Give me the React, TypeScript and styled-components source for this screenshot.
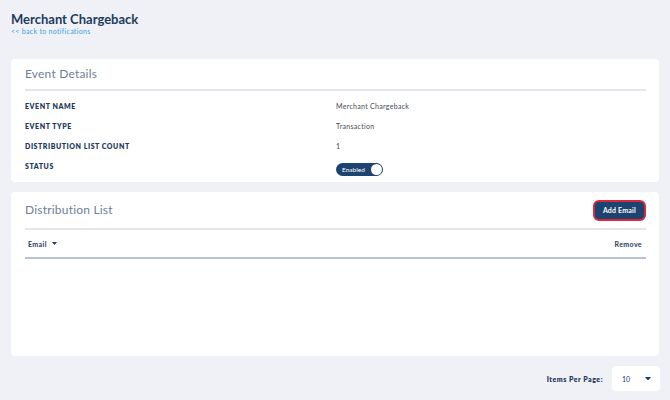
import React from 'react';
import styled, { createGlobalStyle } from 'styled-components';

const GlobalStyle = createGlobalStyle`
  html, body {
    margin: 0;
    padding: 0;
    background: #f0f1f6;
    font-family: Lato, "Open Sans", sans-serif;
  }
`;

const Page = styled.div`
  padding: 12px 11px 0 11px;
  display: flex;
  flex-direction: column;
`;

const PageTitle = styled.h1`
  margin: 0;
  font-size: 13px;
  font-weight: 700;
  color: #1d3c5e;
  line-height: 15px;
`;

const BackLink = styled.a`
  font-size: 7px;
  color: #3aa3dc;
  line-height: 9px;
  letter-spacing: 0.3px;
  text-decoration: none;
  margin-bottom: 23px;
`;

const Card = styled.section<{ $height: number }>`
  background: #ffffff;
  border-radius: 4px;
  padding: 0 13px 0 14px;
  height: ${(p) => p.$height}px;
  box-sizing: border-box;
  margin-bottom: 10px;
`;

const CardHeader = styled.div<{ $height: number }>`
  display: flex;
  align-items: center;
  justify-content: space-between;
  height: ${(p) => p.$height}px;
  border-bottom: 2px solid #e2e6ed;
`;

const CardTitle = styled.h2`
  margin: 0 0 2px 0;
  font-size: 12px;
  font-weight: 400;
  color: #6e7f95;
  letter-spacing: 0.2px;
`;

const DetailRows = styled.div`
  display: flex;
  flex-direction: column;
  padding-top: 5px;
`;

const DetailRow = styled.div`
  display: grid;
  grid-template-columns: 311px 1fr;
  align-items: center;
  height: 20px;
`;

const Label = styled.span`
  font-size: 7px;
  font-weight: 800;
  color: #1e3a5c;
  text-transform: uppercase;
  letter-spacing: 0.55px;
`;

const Value = styled.span`
  font-size: 7px;
  color: #444a52;
  letter-spacing: 0.3px;
`;

const Toggle = styled.div`
  display: inline-flex;
  align-items: center;
  justify-content: space-between;
  width: 47px;
  height: 13px;
  box-sizing: border-box;
  border-radius: 7px;
  background: #1d4470;
  padding: 0 1px 0 6px;
  color: #ffffff;
  font-size: 6.5px;
`;

const Knob = styled.span`
  width: 11px;
  height: 11px;
  border-radius: 50%;
  background: #ffffff;
`;

const AddButton = styled.button`
  height: 21px;
  padding: 0 8px;
  border: 2px solid #d9283a;
  border-radius: 6px;
  background: #1d4470;
  color: #ffffff;
  font-family: inherit;
  font-size: 7px;
  font-weight: 700;
  letter-spacing: 0.2px;
  cursor: pointer;
`;

const TableHead = styled.div`
  display: flex;
  align-items: center;
  justify-content: space-between;
  height: 27px;
  border-bottom: 2px solid #b9c3cf;
  padding: 0 4px 0 3px;
`;

const HeadCell = styled.span`
  display: inline-flex;
  align-items: center;
  gap: 5px;
  font-size: 7px;
  font-weight: 700;
  color: #1e3a5c;
  letter-spacing: 0.4px;
`;

const Footer = styled.div`
  display: flex;
  justify-content: flex-end;
  align-items: center;
  gap: 9px;
  margin-right: -1px;
`;

const FooterLabel = styled.span`
  font-size: 7px;
  font-weight: 800;
  color: #1e3a5c;
  letter-spacing: 0.5px;
`;

const Select = styled.div`
  display: flex;
  align-items: center;
  justify-content: space-between;
  width: 48px;
  height: 25px;
  box-sizing: border-box;
  background: #ffffff;
  border-radius: 4px;
  padding: 0 9px 0 10px;
  font-size: 7px;
  color: #1e3a5c;
`;

const Caret = ({ size = 6 }: { size?: number }) => (
  <svg width={size} height={size * 0.6} viewBox="0 0 10 6">
    <path d="M0 0 L10 0 L5 6 Z" fill="#1e3a5c" />
  </svg>
);

const details = [
  { label: 'Event Name', value: 'Merchant Chargeback' },
  { label: 'Event Type', value: 'Transaction' },
  { label: 'Distribution List Count', value: '1' },
];

export default function App() {
  return (
    <>
      <GlobalStyle />
      <Page>
        <PageTitle>Merchant Chargeback</PageTitle>
        <BackLink href="#">&lt;&lt; back to notifications</BackLink>

        <Card $height={123}>
          <CardHeader $height={30}>
            <CardTitle>Event Details</CardTitle>
          </CardHeader>
          <DetailRows>
            {details.map((d) => (
              <DetailRow key={d.label}>
                <Label>{d.label}</Label>
                <Value>{d.value}</Value>
              </DetailRow>
            ))}
            <DetailRow>
              <Label>Status</Label>
              <span>
                <Toggle>
                  Enabled
                  <Knob />
                </Toggle>
              </span>
            </DetailRow>
          </DetailRows>
        </Card>

        <Card $height={164}>
          <CardHeader $height={36}>
            <CardTitle>Distribution List</CardTitle>
            <AddButton>Add Email</AddButton>
          </CardHeader>
          <TableHead>
            <HeadCell>
              Email <Caret size={5} />
            </HeadCell>
            <HeadCell>Remove</HeadCell>
          </TableHead>
        </Card>

        <Footer>
          <FooterLabel>Items Per Page:</FooterLabel>
          <Select>
            10
            <Caret />
          </Select>
        </Footer>
      </Page>
    </>
  );
}
